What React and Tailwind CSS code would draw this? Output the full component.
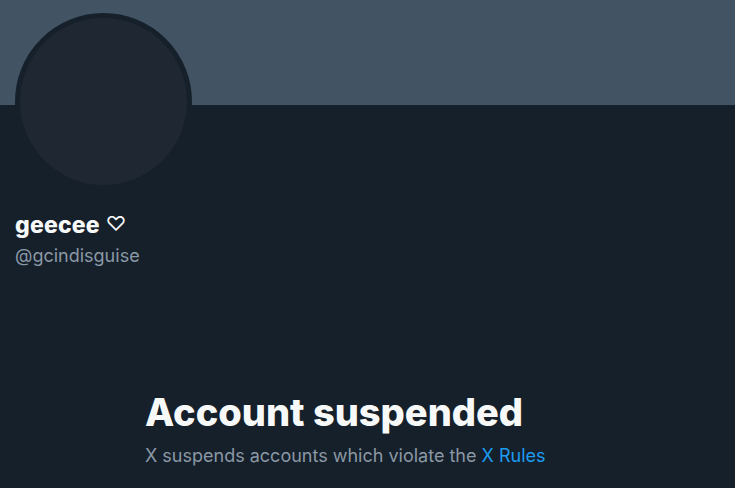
export default function App() {
  return (
    <div className="w-[735px] h-[488px] overflow-hidden bg-[#15202b] font-['Inter','Liberation_Sans',sans-serif]">
      <div className="h-[105px] bg-[#425364]" />
      <div className="px-[15px]">
        <div className="-mt-[92px] w-[177px] h-[177px] rounded-full border-[5px] border-[#15202b] bg-[#1e2732]" />
        <div className="mt-[21px] flex items-center gap-[6px] text-[23px] leading-[28px] font-extrabold text-[#f7f9f9]">
          <span className="tracking-[0.2px]">geecee</span>
          <span className="font-normal text-[20px] -mt-[2px]">♡</span>
        </div>
        <div className="mt-[5px] text-[18px] leading-[24px] text-[#8b98a5]">@gcindisguise</div>
      </div>
      <div className="pl-[145px] mt-[122px]">
        <h1 className="text-[38px] leading-[44px] font-extrabold text-[#f7f9f9]">Account suspended</h1>
        <p className="mt-[10px] text-[18px] leading-[24px] text-[#8b98a5]">
          X suspends accounts which violate the <span className="text-[#1d9bf0]">X Rules</span>
        </p>
      </div>
    </div>
  );
}
